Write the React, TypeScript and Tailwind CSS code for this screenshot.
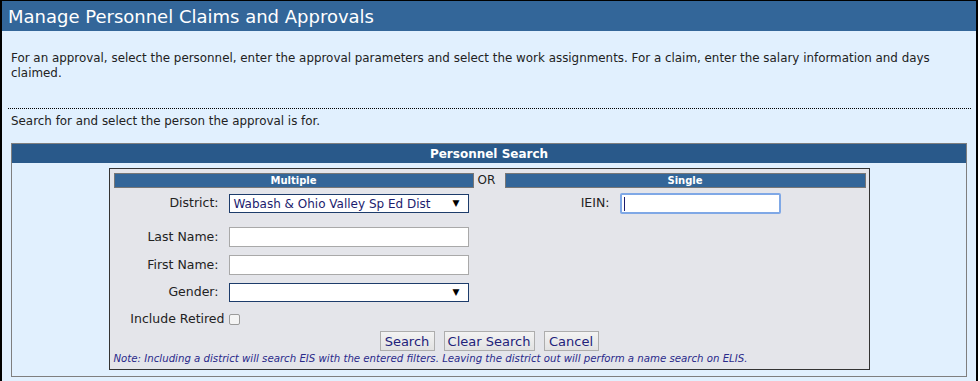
import React from 'react';

const font = { fontFamily: '"DejaVu Sans", Verdana, sans-serif' };

const Label: React.FC<{ children: React.ReactNode }> = ({ children }) => (
  <div className="w-[115px] shrink-0 text-right pr-[10px] text-[12.5px] leading-none text-[#222]">{children}</div>
);

const FakeSelect: React.FC<{ value?: string }> = ({ value }) => (
  <div className="w-[240px] h-[19px] bg-white border border-[#1d3c6b] flex items-center justify-between pl-[4px] pr-[8px]">
    <span className="text-[12px] text-[#1c1c6e] leading-none">{value}</span>
    <span className="text-[9px] text-black leading-none">▼</span>
  </div>
);

const TextBox: React.FC = () => (
  <div className="w-[240px] h-[20px] bg-white border border-[#a9a9a9]" />
);

const Bar: React.FC<{ children: React.ReactNode }> = ({ children }) => (
  <div className="h-[15px] bg-[#336699] border border-[#777] flex items-center justify-center text-[10px] font-bold text-white leading-none">
    {children}
  </div>
);

const Button: React.FC<{ children: React.ReactNode; w: string }> = ({ children, w }) => (
  <button
    className={`${w} h-[20px] bg-gradient-to-b from-[#f3f3f3] to-[#e2e2e2] border border-[#adadad] text-[13px] text-[#22227a] leading-none`}
  >
    {children}
  </button>
);

export default function App() {
  return (
    <div style={font} className="w-[978px] h-[381px] overflow-hidden bg-[#e1f0fe] border-t border-l-2 border-r-2 border-black">
      <div className="h-[30px] bg-[#336699] flex items-center pl-[6px] text-[18px] text-white">
        Manage Personnel Claims and Approvals
      </div>

      <p className="mt-[20px] pl-[9px] pr-[30px] text-[11.9px] leading-[15px] text-[#222]">
        For an approval, select the personnel, enter the approval parameters and select the work assignments. For a claim, enter the salary information and days claimed.
      </p>

      <div className="mt-[27px] ml-[6px] mr-[5px] border-t border-dotted border-black" />

      <p className="mt-[5px] pl-[9px] text-[11.9px] leading-[15px] text-[#222]">
        Search for and select the person the approval is for.
      </p>

      <div className="mt-[14px] ml-[9px] w-[956px] h-[234px] border border-[#7f7f7f]">
        <div className="h-[19px] bg-[#29598a] flex items-center justify-center text-[12px] font-bold text-white">
          Personnel Search
        </div>

        <div className="mt-[5px] mx-auto w-[761px] bg-[#e4e5ea] border border-[#333] p-[4px]">
          <div className="grid grid-cols-[360px_31px_361px]">
            <div>
              <Bar>Multiple</Bar>
              <div className="mt-[6px] h-[19px] flex items-center">
                <Label>District:</Label>
                <FakeSelect value="Wabash & Ohio Valley Sp Ed Dist" />
              </div>
              <div className="mt-[14px] h-[20px] flex items-center">
                <Label>Last Name:</Label>
                <TextBox />
              </div>
              <div className="mt-[8px] h-[20px] flex items-center">
                <Label>First Name:</Label>
                <TextBox />
              </div>
              <div className="mt-[8px] h-[19px] flex items-center">
                <Label>Gender:</Label>
                <FakeSelect />
              </div>
              <div className="mt-[11px] h-[12px] flex items-center">
                <div className="w-[115px] shrink-0 text-right pr-[4px] text-[12.5px] leading-none text-[#222]">Include Retired</div>
                <div className="w-[11px] h-[11px] bg-[#f4f4f4] border border-[#9a9a9a] rounded-[2px]" />
              </div>
            </div>
            <div className="text-[12px] text-[#222] pl-[4px] leading-[15px]">OR</div>
            <div>
              <Bar>Single</Bar>
              <div className="mt-[6px] h-[19px] flex items-center">
                <Label>IEIN:</Label>
                <div className="w-[161px] h-[21px] bg-white border-2 border-[#7fa8e6] rounded-[2px] flex items-center pl-[2px]">
                  <div className="w-px h-[14px] bg-[#1c1c6e]" />
                </div>
              </div>
            </div>
          </div>

          <div className="mt-[6px] flex justify-center gap-[9px]">
            <Button w="w-[55px]">Search</Button>
            <Button w="w-[91px]">Clear Search</Button>
            <Button w="w-[55px]">Cancel</Button>
          </div>

          <div className="mt-[2px] text-[10.2px] italic text-[#2a2a8a] leading-[12px]">
            Note: Including a district will search EIS with the entered filters. Leaving the district out will perform a name search on ELIS.
          </div>
        </div>
      </div>
    </div>
  );
}
